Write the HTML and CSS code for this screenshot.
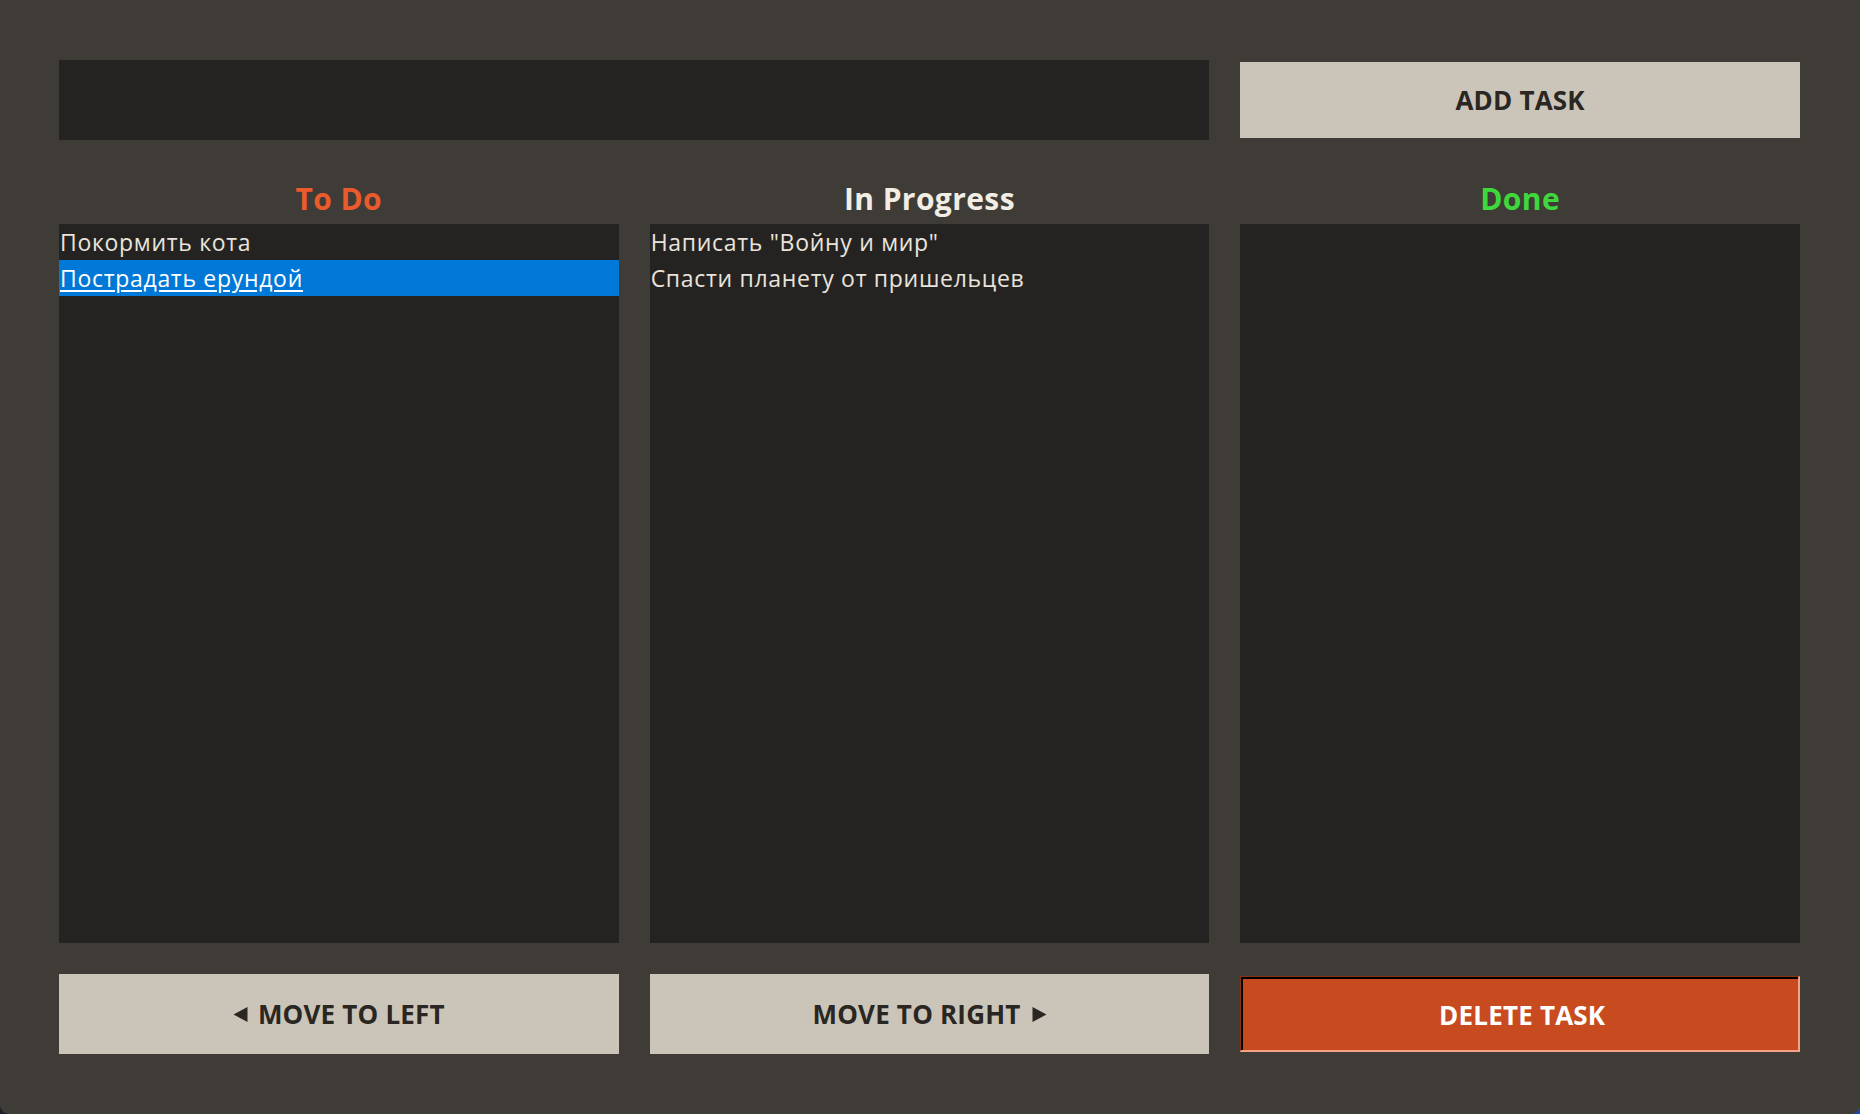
FILE: index.html
```html
<!DOCTYPE html>
<html lang="ru">
<head>
<meta charset="utf-8">
<title>Kanban</title>
<link rel="stylesheet" href="styles.css">
</head>
<body>
<div class="window">
  <div class="top-row">
    <div class="task-input"></div>
    <button class="btn btn-light btn-add">ADD TASK</button>
  </div>
  <div class="board">
    <section class="column">
      <h2 class="col-title col-todo">To Do</h2>
      <ul class="list">
        <li class="item">Покормить кота</li>
        <li class="item item-selected">Пострадать ерундой</li>
      </ul>
    </section>
    <section class="column">
      <h2 class="col-title col-progress">In Progress</h2>
      <ul class="list">
        <li class="item">Написать "Войну и мир"</li>
        <li class="item">Спасти планету от пришельцев</li>
      </ul>
    </section>
    <section class="column">
      <h2 class="col-title col-done">Done</h2>
      <ul class="list"></ul>
    </section>
  </div>
  <div class="bottom-row">
    <button class="btn btn-light"><svg class="tri tri-left" viewBox="0 0 14 15" width="15" height="15"><polygon points="14,0 14,15 0,7.5"/></svg>MOVE TO LEFT</button>
    <button class="btn btn-light">MOVE TO RIGHT<svg class="tri tri-right" viewBox="0 0 14 15" width="15" height="15"><polygon points="0,0 0,15 14,7.5"/></svg></button>
    <button class="btn btn-delete">DELETE TASK</button>
  </div>
</div>
</body>
</html>
```
FILE: styles.css
```css
html, body {
  margin: 0;
  padding: 0;
}
body {
  background: linear-gradient(to right, #1c2026 0%, #23314a 60%, #1e45b0 100%);
  font-family: "Open Sans", "Noto Sans", sans-serif;
}
.window {
  box-sizing: border-box;
  width: 1860px;
  height: 1114px;
  background: #3f3c37;
  border-radius: 0 0 9px 9px;
  padding: 60px 60px 60px 59px;
  display: flex;
  flex-direction: column;
}
.top-row,
.board,
.bottom-row {
  display: grid;
  grid-template-columns: 1fr 1fr 1fr;
  column-gap: 31px;
}
.top-row {
  height: 80px;
}
.task-input {
  grid-column: 1 / 3;
  background: #252321;
}
.btn {
  font-family: "Open Sans", "Noto Sans", sans-serif;
  font-weight: 700;
  font-size: 26px;
  letter-spacing: 0.2px;
  border: none;
  margin: 0;
  padding: 0;
  display: flex;
  align-items: center;
  justify-content: center;
  cursor: pointer;
}
.btn-light {
  background: #cbc5b9;
  color: #2a2622;
}
.btn-add {
  align-self: center;
  height: 76px;
}
.board {
  flex: 1;
  margin-top: 40px;
  margin-bottom: 31px;
  min-height: 0;
}
.column {
  display: flex;
  flex-direction: column;
  min-height: 0;
}
.col-title {
  margin: 1px 0 7px 0;
  height: 36px;
  line-height: 36px;
  font-size: 30px;
  letter-spacing: 0.4px;
  font-weight: 700;
  text-align: center;
}
.col-todo { color: #ea5a2b; }
.col-progress { color: #f2eee6; }
.col-done { color: #3fd83c; }
.list {
  flex: 1;
  list-style: none;
  margin: 0;
  padding: 0;
  background: #252321;
}
.item {
  height: 36px;
  line-height: 36px;
  font-size: 23px;
  letter-spacing: 0.7px;
  color: #e8e4dc;
  padding-left: 1px;
  white-space: nowrap;
}
.item-selected {
  background: #0078d7;
  color: #ffffff;
  text-decoration: underline;
  text-underline-offset: 3px;
}
.bottom-row {
  height: 80px;
}
.tri {
  fill: #2a2622;
  flex: none;
}
.tri-left { margin-right: 10px; }
.tri-right { margin-left: 11px; }
.btn-delete {
  align-self: center;
  height: 76px;
  box-sizing: border-box;
  background: #c84b20;
  color: #ffffff;
  border-top: 1px solid #8a3314;
  border-left: 1px solid #8a3314;
  border-bottom: 2px solid #f5a287;
  border-right: 2px solid #f5a287;
  box-shadow: inset 2px 2px 0 #000000;
  padding-top: 3px;
  padding-left: 5px;
}
```
